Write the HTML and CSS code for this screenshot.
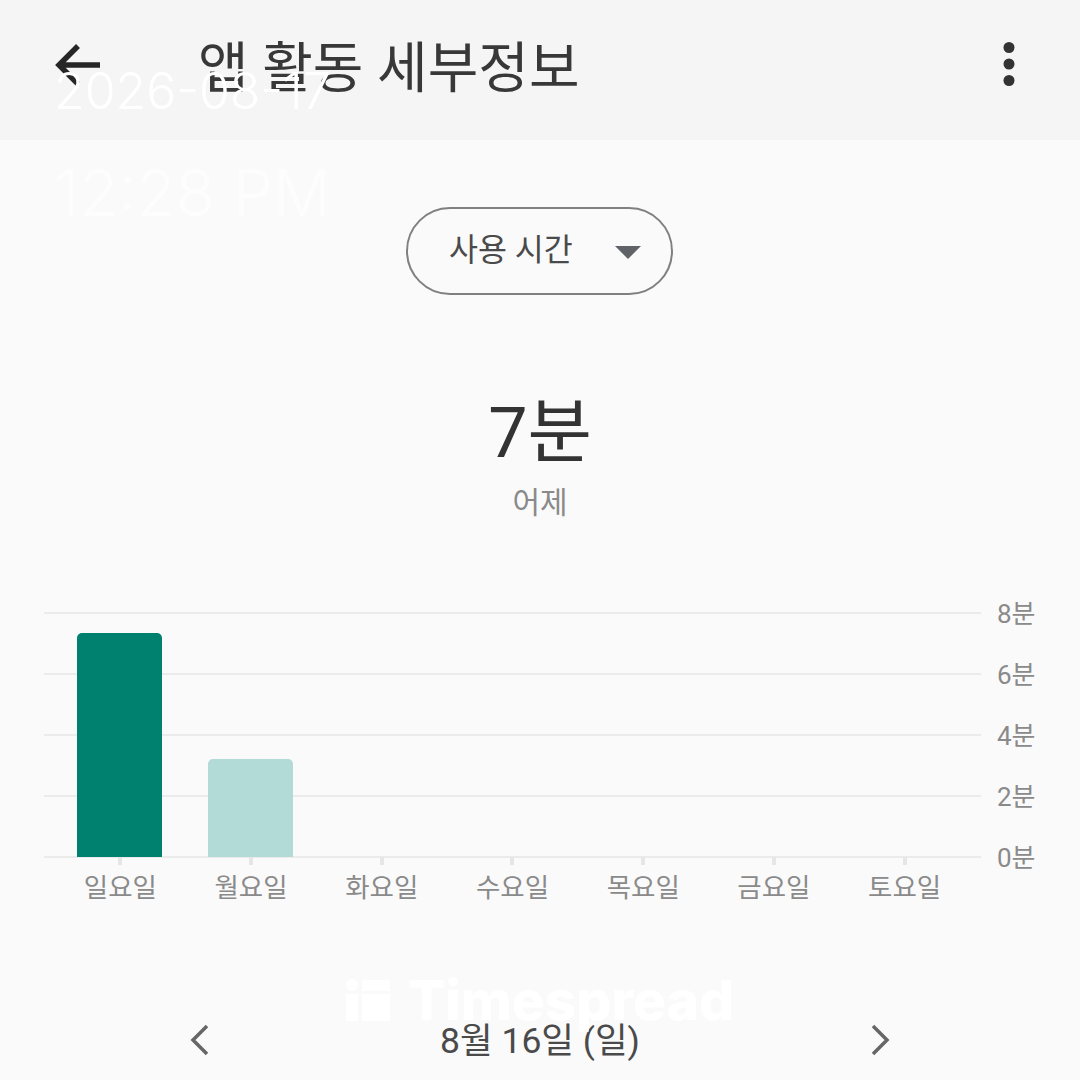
FILE: index.html
```html
<!DOCTYPE html>
<html lang="ko">
<head>
    <meta charset="UTF-8">
    <meta name="viewport" content="width=device-width, initial-scale=1.0">
    <title>앱 활동 세부정보</title>
    <link rel="stylesheet" href="styles.css">
</head>
<body>
    <div class="screen">
        <!-- Top bar -->
        <div class="top-bar">
            <svg class="back-icon" width="48" height="48" viewBox="0 0 48 48">
                <path d="M46 24H6M24 5L5 24l19 19" fill="none" stroke="#262626" stroke-width="5.500"/>
            </svg>
            <div class="title">앱 활동 세부정보</div>
            <svg class="more-icon" width="14" height="48" viewBox="0 0 14 48">
                <circle cx="7" cy="6.500" r="5.500" fill="#333"/>
                <circle cx="7" cy="23" r="5.500" fill="#333"/>
                <circle cx="7" cy="39.500" r="5.500" fill="#333"/>
            </svg>
        </div>

        <div class="selector-row">
            <div class="selector">
                <span class="selector-label">사용 시간</span>
                <span class="selector-arrow"></span>
            </div>
        </div>

        <div class="summary">
            <div class="summary-value">7분</div>
            <div class="summary-day">어제</div>
        </div>

        <!-- Chart -->
        <div class="chart">
            <div class="grid-rows">
                <div class="grid-row"><div class="grid-line"></div><span class="grid-label">8분</span></div>
                <div class="grid-row"><div class="grid-line"></div><span class="grid-label">6분</span></div>
                <div class="grid-row"><div class="grid-line"></div><span class="grid-label">4분</span></div>
                <div class="grid-row"><div class="grid-line"></div><span class="grid-label">2분</span></div>
                <div class="grid-row"><div class="grid-line"></div><span class="grid-label">0분</span></div>
            </div>
            <div class="bars">
                <div class="bar-cell"><div class="bar bar-active" style="height: 224px"></div></div>
                <div class="bar-cell"><div class="bar bar-light" style="height: 98px"></div></div>
                <div class="bar-cell"></div>
                <div class="bar-cell"></div>
                <div class="bar-cell"></div>
                <div class="bar-cell"></div>
                <div class="bar-cell"></div>
            </div>
            <div class="days">
                <div class="day"><span class="tick"></span>일요일</div>
                <div class="day"><span class="tick"></span>월요일</div>
                <div class="day"><span class="tick"></span>화요일</div>
                <div class="day"><span class="tick"></span>수요일</div>
                <div class="day"><span class="tick"></span>목요일</div>
                <div class="day"><span class="tick"></span>금요일</div>
                <div class="day"><span class="tick"></span>토요일</div>
            </div>
        </div>

        <!-- Date navigation -->
        <div class="date-nav">
            <svg width="20" height="32" viewBox="0 0 20 32">
                <path d="M18 2L4 16l14 14" fill="none" stroke="#666" stroke-width="3.500"/>
            </svg>
            <div class="date-label">8월 16일 (일)</div>
            <svg width="20" height="32" viewBox="0 0 20 32">
                <path d="M2 2l14 14L2 30" fill="none" stroke="#666" stroke-width="3.500"/>
            </svg>
        </div>

        <!-- Stamp laid over the screenshot -->
        <div class="stamp-date">2026-08-17</div>
        <div class="stamp-time">12:28 PM</div>
        <div class="stamp-logo">
            <svg width="44" height="42" viewBox="0 0 44 42">
                <circle cx="6" cy="6" r="6" fill="#fff"/>
                <rect x="0" y="15" width="12" height="27" fill="#fff"/>
                <rect x="16" y="1" width="28" height="11" fill="#fff"/>
                <rect x="16" y="15" width="28" height="27" fill="#fff"/>
            </svg>
            <span>Timespread</span>
        </div>
    </div>
</body>
</html>
```

FILE: styles.css
```css
body {
    margin: 0;
    padding: 0;
    background-color: #fafafa;
    font-family: Roboto, "Noto Sans CJK KR", sans-serif;
}
.screen {
    position: relative;
    width: 1080px;
    height: 1080px;
    overflow: hidden;
}
.top-bar {
    height: 140px;
    box-sizing: border-box;
    background-color: #f5f5f5;
    display: flex;
    align-items: center;
    padding: 0 64px 10px 54px;
}
.back-icon {
    margin-right: 96px;
}
.title {
    flex: 1;
    font-size: 55px;
    color: #383838;
    line-height: 1;
    margin-top: 6px;
}
.selector-row {
    display: flex;
    justify-content: center;
    padding-top: 67px;
    padding-right: 1px;
}
.selector {
    width: 267px;
    height: 88px;
    box-sizing: border-box;
    border: 2.500px solid #808080;
    border-radius: 44px;
    display: flex;
    align-items: center;
    padding: 0 28px 0 41px;
}
.selector-label {
    flex: 1;
    font-size: 31.500px;
    color: #4a4a4a;
    margin-top: -8px;
}
.selector-arrow {
    width: 0;
    height: 0;
    margin: 2px 2px 0 0;
    border-left: 13px solid transparent;
    border-right: 13px solid transparent;
    border-top: 13px solid #5f6368;
}
.summary {
    text-align: center;
    padding-top: 93px;
}
.summary-value {
    font-size: 70px;
    line-height: 90px;
    color: #333;
}
.summary-day {
    font-size: 30px;
    line-height: 44px;
    margin-top: 3px;
    color: #8a8a8a;
}
.chart {
    position: relative;
    margin-top: 87px;
    height: 330px;
}
.grid-rows {
    display: flex;
    flex-direction: column;
    gap: 59px;
    padding-left: 44px;
}
.grid-row {
    display: flex;
    align-items: center;
    height: 2px;
}
.grid-line {
    width: 937px;
    height: 2px;
    background-color: #ebebeb;
}
.grid-label {
    margin-left: 16px;
    margin-bottom: 4px;
    font-size: 26px;
    color: #8a8a8a;
}
.bars {
    position: absolute;
    left: 54px;
    top: 0;
    width: 915px;
    height: 245px;
    display: grid;
    grid-template-columns: repeat(7, 1fr);
}
.bar-cell {
    display: flex;
    align-items: flex-end;
    justify-content: center;
}
.bar {
    width: 85px;
    border-radius: 5px 5px 0 0;
}
.bar-active {
    background-color: #00806f;
}
.bar-light {
    background-color: #b2dad6;
}
.days {
    position: absolute;
    left: 55px;
    top: 245px;
    width: 915px;
    display: grid;
    grid-template-columns: repeat(7, 1fr);
}
.day {
    display: flex;
    flex-direction: column;
    align-items: center;
    font-size: 26.500px;
    line-height: 38px;
    color: #8a8a8a;
}
.tick {
    width: 4px;
    height: 8px;
    margin-bottom: 4px;
    background-color: #e6e6e6;
}
.date-nav {
    position: absolute;
    left: 189px;
    right: 189px;
    top: 1010px;
    height: 60px;
    display: flex;
    align-items: center;
    justify-content: space-between;
}
.date-label {
    font-size: 35.500px;
    color: #4a4a4a;
    margin-top: -6px;
}
.stamp-date,
.stamp-time {
    position: absolute;
    left: 54px;
    font-family: Inter, sans-serif;
    font-weight: 300;
    line-height: 1;
}
.stamp-date {
    top: 66px;
    font-size: 50px;
    color: #fff;
}
.stamp-time {
    top: 161px;
    font-size: 64px;
    color: #fdfdfd;
}
.stamp-logo {
    position: absolute;
    left: 346px;
    top: 979px;
    display: flex;
    align-items: center;
    gap: 18px;
    font-family: Inter, sans-serif;
    font-weight: 800;
    font-size: 55px;
    line-height: 42px;
    color: #fff;
}
```
